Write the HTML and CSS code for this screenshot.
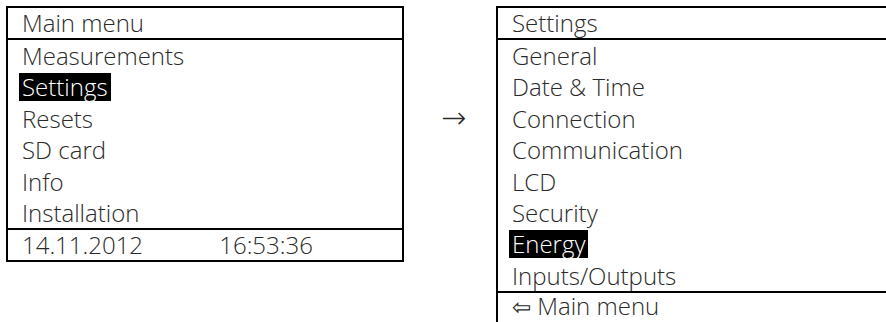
FILE: index.html
```html
<!DOCTYPE html>
<html lang="en">
<head>
    <meta charset="UTF-8">
    <meta name="viewport" content="width=device-width, initial-scale=1.0">
    <title>Menu navigation</title>
    <link rel="stylesheet" href="styles.css">
</head>
<body>
<div class="screens">
    <div class="menu main-menu">
        <div class="menu-title">Main menu</div>
        <ul class="menu-items">
            <li>Measurements</li>
            <li><span class="selected">Settings</span></li>
            <li>Resets</li>
            <li>SD card</li>
            <li>Info</li>
            <li>Installation</li>
        </ul>
        <div class="menu-footer clock">
            <span class="date">14.11.2012</span>
            <span class="time">16:53:36</span>
        </div>
    </div>

    <div class="arrow">&rarr;</div>

    <div class="menu sub-menu">
        <div class="menu-title">Settings</div>
        <ul class="menu-items">
            <li>General</li>
            <li>Date &amp; Time</li>
            <li>Connection</li>
            <li>Communication</li>
            <li>LCD</li>
            <li>Security</li>
            <li><span class="selected">Energy</span></li>
            <li>Inputs/Outputs</li>
        </ul>
        <div class="menu-footer back-row"><span class="back">&#x21E6;</span> Main menu</div>
    </div>
</div>
</body>
</html>
```

FILE: styles.css
```css
body {
    margin: 0;
    padding: 0;
    background-color: #fff;
    color: #2a2a2a;
    font-family: "Open Sans", "DejaVu Sans", sans-serif;
    font-weight: 300;
    font-size: 24px;
    height: 322px;
    overflow: hidden;
}

.screens {
    display: flex;
    align-items: flex-start;
    padding: 6px 0 0 6px;
}

.menu {
    border: 2px solid #000;
    box-sizing: border-box;
    flex-shrink: 0;
}

.main-menu {
    width: 398px;
}

.sub-menu {
    width: 420px;
}

.menu-title {
    height: 30px;
    line-height: 30px;
    padding-left: 14px;
    border-bottom: 2px solid #000;
}

.menu-items {
    list-style: none;
    margin: 0;
    padding: 0;
}

.menu-items li {
    height: 31.4px;
    line-height: 32px;
    padding-left: 14px;
}

.selected {
    display: inline-block;
    background-color: #000;
    color: #fff;
    line-height: 28px;
    padding: 0 3px;
    margin-left: -3px;
}

.menu-footer {
    height: 30px;
    line-height: 30px;
    padding-left: 14px;
    border-top: 2px solid #000;
}

.back-row {
    height: 40px;
    line-height: 24px;
    padding-top: 1px;
    box-sizing: border-box;
}

.clock .date {
    display: inline-block;
    width: 191px;
}

.back {
    font-family: "DejaVu Sans", sans-serif;
    font-size: 23px;
}

.arrow {
    width: 92px;
    padding-top: 94px;
    padding-left: 37px;
    box-sizing: border-box;
    flex-shrink: 0;
    font-family: "DejaVu Sans", sans-serif;
    font-size: 30px;
}
```
